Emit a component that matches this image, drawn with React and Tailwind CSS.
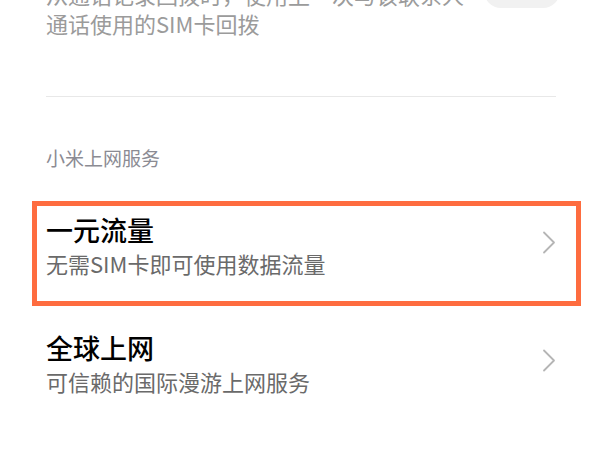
const services = [
  { id: 1, title: '一元流量', desc: '无需SIM卡即可使用数据流量', highlighted: true },
  { id: 2, title: '全球上网', desc: '可信赖的国际漫游上网服务', highlighted: false },
];

function Chevron() {
  return (
    <svg width="14" height="23" viewBox="0 0 14 23" fill="none" className="shrink-0 -mt-[6px]">
      <path d="M2 1.5 L12 11.5 L2 21.5" stroke="#b5b5b5" strokeWidth="1.8" strokeLinecap="round" strokeLinejoin="round" />
    </svg>
  );
}

function ServiceRow({ item }) {
  return (
    <div className="relative flex items-center justify-between py-[26px]">
      {item.highlighted && (
        <div className="pointer-events-none absolute -left-[14px] -right-[25px] top-[15px] -bottom-[2px] border-[5px] border-[#fe6c3f]" />
      )}
      <div>
        <p className="text-[27px] leading-[36px] font-medium text-black">{item.title}</p>
        <p className="text-[22px] leading-[30px] text-[#6a6a6a]">{item.desc}</p>
      </div>
      <Chevron />
    </div>
  );
}

export default function App() {
  return (
    <div
      className="h-[450px] w-[600px] overflow-hidden bg-white px-[46px] pr-[44px]"
      style={{ fontFamily: '"Noto Sans CJK SC", "Noto Sans", sans-serif' }}
    >
      {/* card scrolled partly out of view */}
      <div className="-mt-[55px] flex items-center justify-between gap-3 pb-[60px]">
        <div className="min-w-0 whitespace-nowrap">
          <p className="text-[27px] leading-[36px] font-medium text-black">智能回拨</p>
          <p className="text-[22px] leading-[26px] text-[#9b9b9b]">从通话记录回拨时，使用上一次与该联系人</p>
          <p className="mt-[3px] text-[22px] leading-[26px] text-[#9b9b9b]">通话使用的SIM卡回拨</p>
        </div>
        <div className="-mr-[4px] h-[34px] w-[76px] shrink-0 rounded-full bg-[#f1f1f1]" />
      </div>

      <div className="h-px bg-[#e8e8e8]" />

      <p className="pt-[47px] pb-[14px] text-[19px] leading-[28px] text-[#8b8b93]">小米上网服务</p>

      {services.map((item) => (
        <ServiceRow key={item.id} item={item} />
      ))}
    </div>
  );
}
